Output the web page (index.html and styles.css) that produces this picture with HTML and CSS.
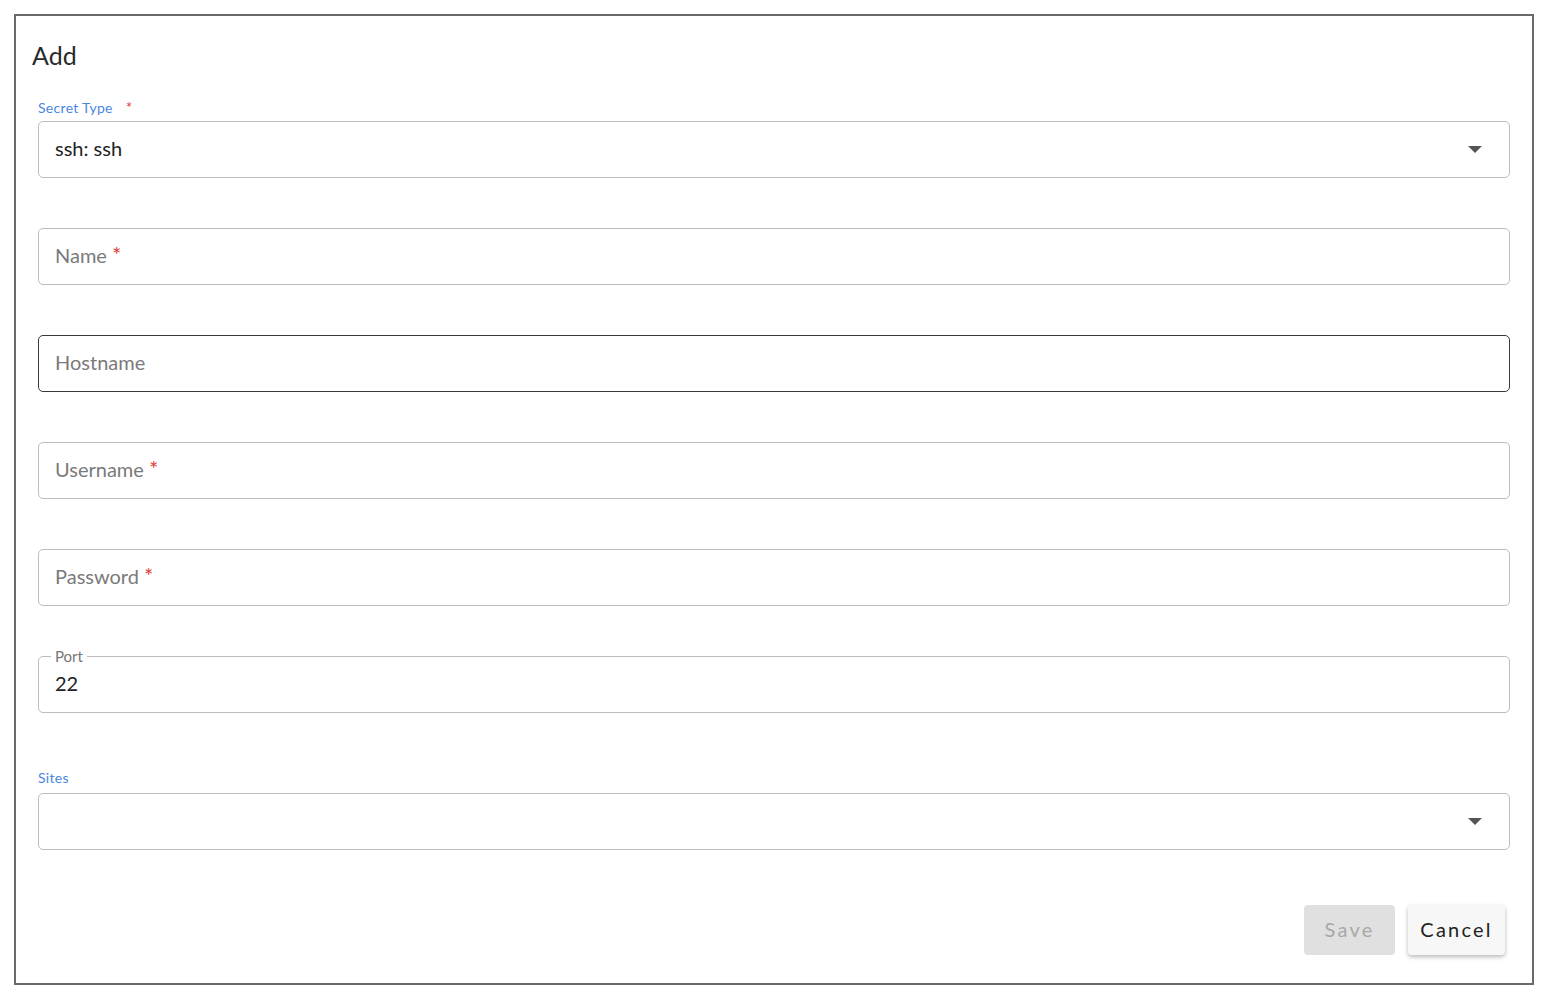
FILE: index.html
```html
<!DOCTYPE html>
<html>
<head>
<meta charset="utf-8">
<link rel="stylesheet" href="styles.css">
</head>
<body>
<div class="dialog">
  <h1 class="title">Add</h1>

  <div class="group">
    <div class="top-label">Secret Type <span class="req req-gap">*</span></div>
    <div class="field select">
      <span class="value">ssh: ssh</span>
      <svg class="caret" width="14" height="8" viewBox="0 0 14 8"><path d="M0 0 L14 0 L7 7 Z" fill="#555"/></svg>
    </div>
  </div>

  <div class="field spaced"><span class="placeholder">Name <span class="req">*</span></span></div>
  <div class="field spaced focus"><span class="placeholder">Hostname</span></div>
  <div class="field spaced"><span class="placeholder">Username <span class="req">*</span></span></div>
  <div class="field spaced"><span class="placeholder">Password <span class="req">*</span></span></div>
  <div class="field spaced floated">
    <span class="float-label">Port</span>
    <span class="value">22</span>
  </div>

  <div class="group sites">
    <div class="top-label">Sites</div>
    <div class="field select">
      <span class="value"></span>
      <svg class="caret" width="14" height="8" viewBox="0 0 14 8"><path d="M0 0 L14 0 L7 7 Z" fill="#555"/></svg>
    </div>
  </div>

  <div class="actions">
    <button class="btn btn-save" disabled>Save</button>
    <button class="btn btn-cancel">Cancel</button>
  </div>
</div>
</body>
</html>
```
FILE: styles.css
```css
html, body {
  margin: 0;
  padding: 0;
  background: #fff;
}
body {
  font-family: "Lato", "Open Sans", sans-serif;
  color: #222;
}
.dialog {
  margin: 14px 0 0 14px;
  width: 1520px;
  box-sizing: border-box;
  border: 2px solid #6a6a6a;
  padding: 23px 22px 28px 22px;
}
.title {
  margin: 0 0 0 -6px;
  font-size: 25px;
  font-weight: 400;
  line-height: 32px;
  color: #2a2a2a;
}
.group {
  margin-top: 28px;
}
.top-label {
  font-size: 14px;
  letter-spacing: 0.3px;
  line-height: 16px;
  color: #4a86df;
  height: 16px;
  margin-bottom: 6px;
}
.req {
  color: #e0403a;
  font-size: 1.1em;
}
.req-gap {
  margin-left: 9px;
}
.field {
  position: relative;
  box-sizing: border-box;
  height: 57px;
  border: 1.5px solid #bdbdbd;
  border-radius: 5px;
  display: flex;
  align-items: center;
  padding: 0 27px 4px 16px;
  font-size: 20px;
}
.field.spaced {
  margin-top: 50px;
}
.field.focus {
  border-color: #3a3a3a;
}
.select {
  justify-content: space-between;
}
.select .caret {
  margin-top: 4px;
}
.value {
  color: #222;
}
.placeholder {
  color: #7a7a7a;
}
.caret {
  display: block;
}
.float-label {
  position: absolute;
  top: -10px;
  left: 12px;
  padding: 0 4px;
  background: #fff;
  font-size: 15px;
  line-height: 18px;
  color: #777;
}
.sites {
  margin-top: 57px;
}
.sites .top-label {
  margin-bottom: 7px;
}
.actions {
  display: flex;
  justify-content: flex-end;
  gap: 13px;
  margin-top: 55px;
  margin-right: 5px;
}
.btn {
  height: 50px;
  border: none;
  border-radius: 4px;
  font-family: "Lato", "Open Sans", sans-serif;
  font-size: 20px;
  letter-spacing: 2.2px;
  padding: 0 0 3px 0;
}
.btn-save {
  width: 91px;
  background: #e0e0e0;
  color: #a8a8a8;
}
.btn-cancel {
  width: 97px;
  background: #f7f7f7;
  color: #222;
  box-shadow: 0 2px 4px rgba(0,0,0,0.28);
}
```
